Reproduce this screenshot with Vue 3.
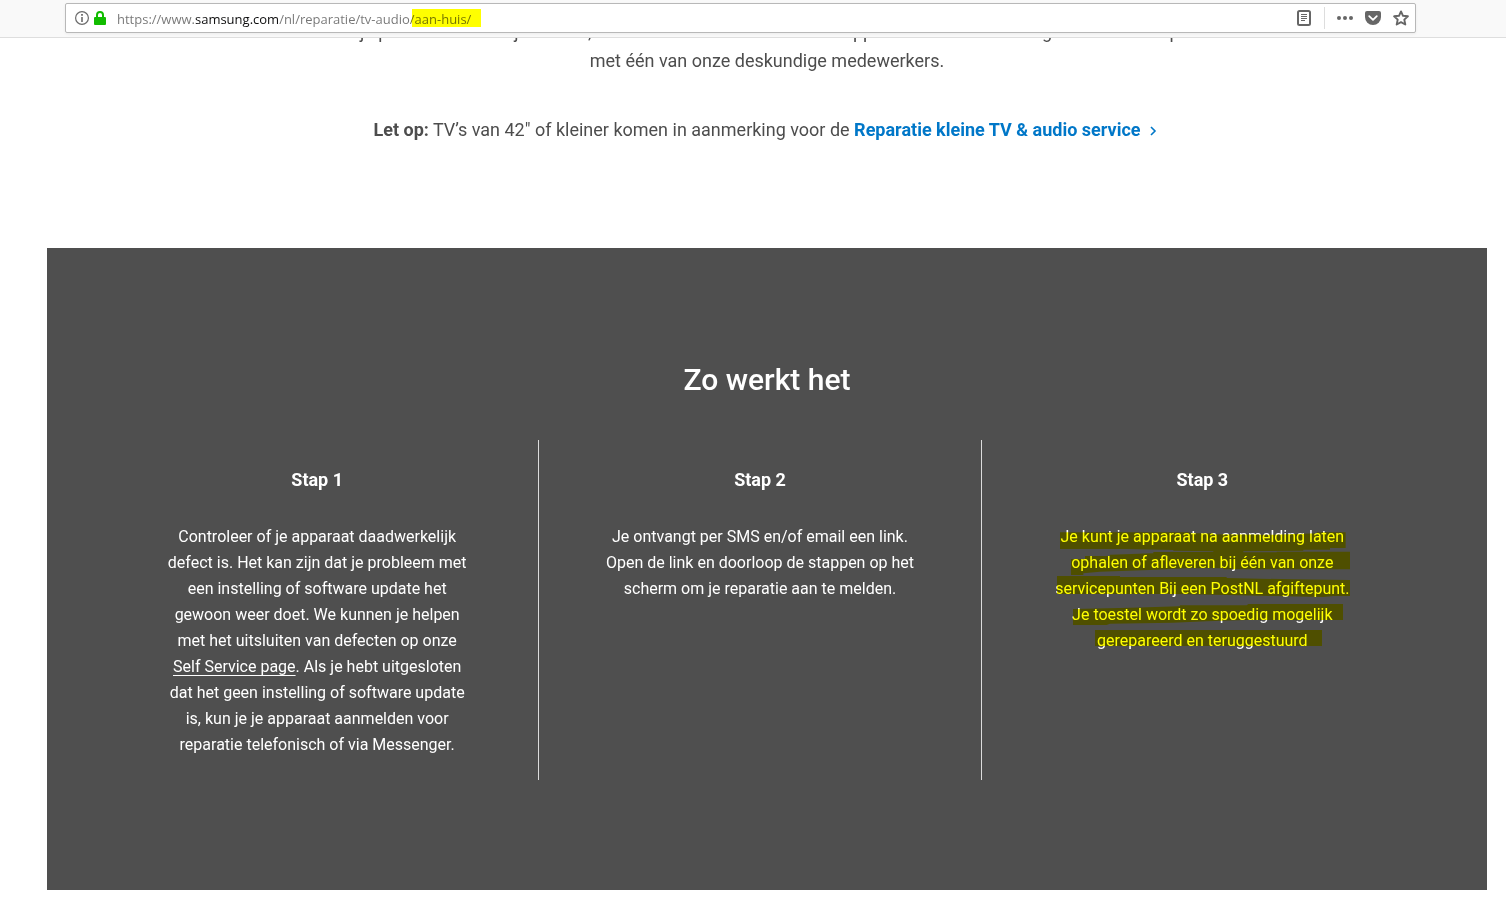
<script setup>
import { ref } from 'vue'

const address = ref('https://www.samsung.com/nl/reparatie/tv-audio/aan-huis/')

const marks = [
  '60,37 450,37 450,40 520,40 520,43 700,44 830,40 830,37 917,37 917,84 870,84 870,89 790,89 790,92 520,94 400,92 400,90 260,87 60,87',
  '93,117 135,117 135,108 210,108 210,104 340,100 340,96 520,96 520,93 610,93 610,97 710,97 710,95 930,95 930,148 550,148 550,145 440,145 330,150 180,155 130,160 130,165 93,165',
  '51,168 240,168 240,171 560,171 560,174 760,178 930,180 930,228 880,228 850,231 700,228 560,225 400,222 51,222',
  '99,267 270,263 420,259 420,256 620,256 625,252 909,252 909,300 620,300 500,304 400,308 210,311 200,315 99,315',
  '165,330 846,330 846,378 165,378',
]
</script>

<template>
  <div class="browser">
    <header class="toolbar">
      <div class="urlbar">
        <button class="icon" type="button" aria-label="Site-informatie">
          <svg width="16" height="16" viewBox="0 0 16 16" fill="none" stroke="#6b6b6b">
            <circle cx="8" cy="8" r="6.4" stroke-width="1.2" />
            <path d="M8 7v5" stroke-width="1.6" />
            <path d="M8 4v1.8" stroke-width="1.8" />
          </svg>
        </button>
        <svg class="lock" width="12" height="14" viewBox="0 0 12 14">
          <path d="M3 7V4a3 3 0 0 1 6 0v3" fill="none" stroke="#12bc00" stroke-width="2" />
          <rect x="0" y="6" width="12" height="8" rx="1" fill="#12bc00" />
        </svg>
        <input v-model="address" class="address" type="text" aria-label="Adres" spellcheck="false" />
        <button class="icon" type="button" aria-label="Lezerweergave">
          <svg width="16" height="16" viewBox="0 0 16 16" fill="none" stroke="#666">
            <rect x="2" y="1" width="12" height="14" rx="1.5" stroke-width="2" />
            <path d="M5 4.5h6M5 6.5h6M5 8.5h6M5 10.5h4" stroke-width="1" />
          </svg>
        </button>
        <span class="divider"></span>
        <button class="icon" type="button" aria-label="Pagina-acties">
          <svg width="16" height="16" viewBox="0 0 16 16" fill="#666">
            <circle cx="2" cy="8" r="2" /><circle cx="8" cy="8" r="2" /><circle cx="14" cy="8" r="2" />
          </svg>
        </button>
        <button class="icon" type="button" aria-label="Opslaan in Pocket">
          <svg width="16" height="16" viewBox="0 0 16 16">
            <path d="M2 1h12a2 2 0 0 1 2 2v4a8 8 0 0 1-16 0V3a2 2 0 0 1 2-2z" fill="#666" />
            <path d="M4.2 6.2 8 9.8l3.8-3.6" fill="none" stroke="#fff" stroke-width="1.8" stroke-linecap="round" stroke-linejoin="round" />
          </svg>
        </button>
        <button class="icon" type="button" aria-label="Bladwijzer toevoegen">
          <svg width="16" height="16" viewBox="0 0 16 16">
            <path d="M8 1.4l2 4.4 4.9.5-3.6 3.3 1 4.9L8 12.1l-4.3 2.4 1-4.9L1.1 6.3l4.9-.5z" fill="none" stroke="#666" stroke-width="1.9" stroke-linejoin="round" />
          </svg>
        </button>
      </div>
    </header>

    <main class="page">
      <section class="intro">
        <p>Als je problemen met tijden hebt, neem daarom voor herstel van apparaat met een melding snel contact op nu<br />met één van onze deskundige medewerkers.</p>
        <p>
          <strong>Let op:</strong> TV’s van 42" of kleiner komen in aanmerking voor de
          <a class="service" href="#">Reparatie kleine TV &amp; audio service<svg width="8" height="10" viewBox="0 0 8 10"><path d="M2 1l4 4-4 4" fill="none" stroke="#0077c8" stroke-width="1.6" /></svg></a>
        </p>
      </section>

      <section class="how">
        <h2>Zo werkt het</h2>
        <div class="steps">
          <article class="step">
            <h3>Stap 1</h3>
            <p>
              Controleer of je apparaat daadwerkelijk<br />defect is. Het kan zijn dat je probleem met<br />een instelling of software update het<br />gewoon weer doet. We kunnen je helpen<br />met het uitsluiten van defecten op onze<br /><a href="#">Self Service page</a>. Als je hebt uitgesloten<br />dat het geen instelling of software update<br />is, kun je je apparaat aanmelden voor<br />reparatie telefonisch of via Messenger.
            </p>
          </article>
          <article class="step">
            <h3>Stap 2</h3>
            <p>
              Je ontvangt per SMS en/of email een link.<br />Open de link en doorloop de stappen op het<br />scherm om je reparatie aan te melden.
            </p>
          </article>
          <article class="step">
            <h3>Stap 3</h3>
            <p>
              Je kunt je apparaat na aanmelding laten<br />ophalen of afleveren bij één van onze<br />servicepunten Bij een PostNL afgiftepunt.<br />Je toestel wordt zo spoedig mogelijk<br />gerepareerd en teruggestuurd
              <svg class="marker" width="330" height="140" viewBox="0 0 990 420" fill="#ff0" aria-hidden="true">
                <polygon v-for="points in marks" :key="points" :points="points" />
              </svg>
            </p>
          </article>
        </div>
      </section>
    </main>
  </div>
</template>

<style>
body {
  background: #fff;
}
</style>

<style scoped>
.browser {
  font-family: Roboto, "Liberation Sans", sans-serif;
  color: #4d4d4d;
}
.toolbar {
  position: relative;
  padding: 3px 90px 4px 65px;
  background: #f9f9f9;
  border-bottom: 1px solid #dedede;
}
.urlbar {
  display: flex;
  align-items: center;
  height: 28px;
  padding: 0 6px 0 8px;
  border: 1px solid #b8b8b8;
  border-radius: 2px;
  background: #fff;
  box-shadow: 0 1px 3px rgba(0, 0, 0, 0.06);
}
.icon {
  display: flex;
  padding: 0;
  border: 0;
  background: none;
}
.icon + .icon {
  margin-left: 12px;
}
.lock {
  margin: 0 11px 0 4px;
}
.address {
  flex: 1;
  min-width: 0;
  height: 20px;
  padding: 2px 0 0;
  box-sizing: border-box;
  border: 0;
  outline: 0;
  font: 13px/18px "Open Sans", "Noto Sans", sans-serif;
  color: #757575;
  -webkit-text-fill-color: transparent;
  background:
    linear-gradient(90deg, #757575 78px, #0c0c0d 78px 162px, #757575 162px 294px, #707000 294px) text,
    linear-gradient(#ff0, #ff0) 295px 1px / 69px 18px no-repeat border-box;
}
.divider {
  width: 1px;
  height: 22px;
  margin: 0 12px;
  background: #ddd;
}
.page {
  padding: 0 19px 8px 47px;
}
.intro {
  overflow: hidden;
  height: 210px;
  text-align: center;
  font-size: 18px;
  line-height: 29px;
  white-space: nowrap;
}
.intro p {
  margin: -21px 0 61px;
}
.service {
  color: #0077c8;
  font-weight: 700;
  text-decoration: none;
}
.service svg {
  margin: 0 4px 0 8px;
}
.how {
  padding: 112px 64px 110px 49px;
  background: #4f4f4f;
  color: #fff;
  text-align: center;
}
h2 {
  margin: 0 0 40px;
  padding-left: 15px;
  font-size: 30px;
  line-height: 40px;
  font-weight: 500;
}
.steps {
  display: grid;
  grid-template-columns: repeat(3, 1fr);
}
.step {
  min-height: 340px;
  box-sizing: border-box;
  padding-top: 26px;
  white-space: nowrap;
}
.step + .step {
  border-left: 1px solid #dcdcdc;
}
h3 {
  margin: 0 0 30px;
  font-size: 18px;
  line-height: 28px;
  font-weight: 700;
}
.step p {
  position: relative;
  margin: 0;
  font-size: 16px;
  line-height: 26px;
}
.step a {
  color: inherit;
  text-underline-offset: 3px;
}
.marker {
  position: absolute;
  top: -4px;
  left: 50%;
  margin-left: -162px;
  mix-blend-mode: multiply;
}
</style>
